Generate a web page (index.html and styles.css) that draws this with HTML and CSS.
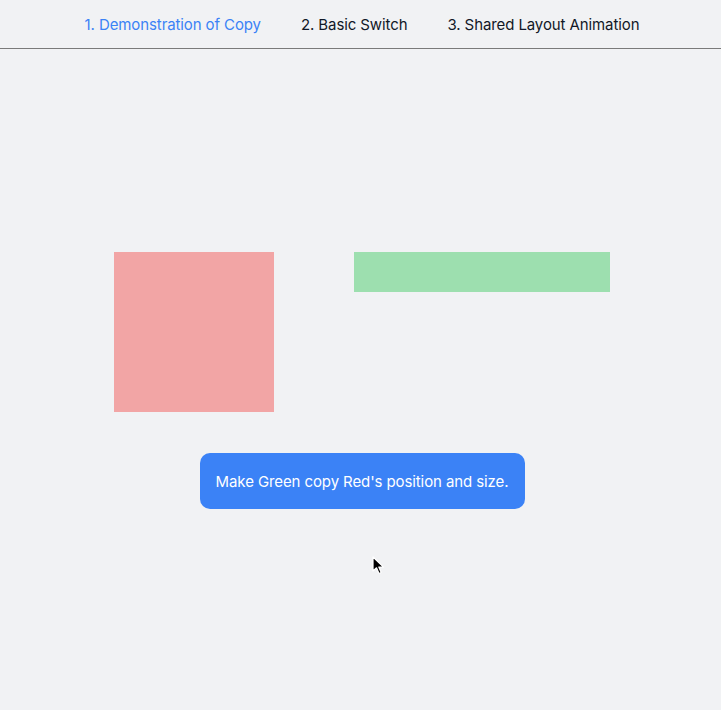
FILE: index.html
```html
<!DOCTYPE html>
<html>
<head>
<meta charset="utf-8">
<link rel="stylesheet" href="styles.css">
</head>
<body>
<nav class="nav">
  <a class="nav-link active">1. Demonstration of Copy</a>
  <a class="nav-link">2. Basic Switch</a>
  <a class="nav-link">3. Shared Layout Animation</a>
</nav>
<main class="stage">
  <div class="boxes">
    <div class="box red"></div>
    <div class="box green"></div>
  </div>
  <button class="btn">Make Green copy Red's position and size.</button>
</main>
<svg class="cursor" width="14" height="20" viewBox="0 0 14 20">
  <path d="M1 1 L1 15 L4.5 11.8 L7 17.5 L9.2 16.5 L6.8 11 L11.5 11 Z" fill="#000" stroke="#fff" stroke-width="1.2" stroke-linejoin="round"/>
</svg>
</body>
</html>
```
FILE: styles.css
```css
html, body {
  margin: 0;
  padding: 0;
  background: #f1f2f4;
  height: 100%;
}
body {
  font-family: Inter, "Noto Sans", sans-serif;
  color: #111827;
  position: relative;
}
.nav {
  box-sizing: border-box;
  height: 49px;
  padding-top: 2px;
  border-bottom: 1px solid #7a7a7a;
  display: flex;
  justify-content: center;
  align-items: center;
  gap: 40px;
  padding-left: 3px;
}
.nav-link {
  font-size: 15px;
  line-height: 20px;
  color: #111827;
  letter-spacing: -0.1px;
}
.nav-link.active {
  color: #3b82f6;
}
.stage {
  display: flex;
  flex-direction: column;
  align-items: center;
  padding-top: 203px;
  padding-left: 3px;
}
.boxes {
  display: flex;
  align-items: flex-start;
  gap: 80px;
}
.box.red {
  width: 160px;
  height: 160px;
  background: #f2a5a5;
}
.box.green {
  width: 256px;
  height: 40px;
  background: #9ddfaf;
}
.btn {
  margin-top: 41px;
  width: 325px;
  height: 56px;
  border: none;
  border-radius: 10px;
  background: #3b82f6;
  color: #fff;
  font-family: Inter, "Noto Sans", sans-serif;
  font-size: 15px;
  letter-spacing: -0.1px;
  padding: 0 16px;
}
.cursor {
  position: absolute;
  left: 372px;
  top: 556px;
}
```
